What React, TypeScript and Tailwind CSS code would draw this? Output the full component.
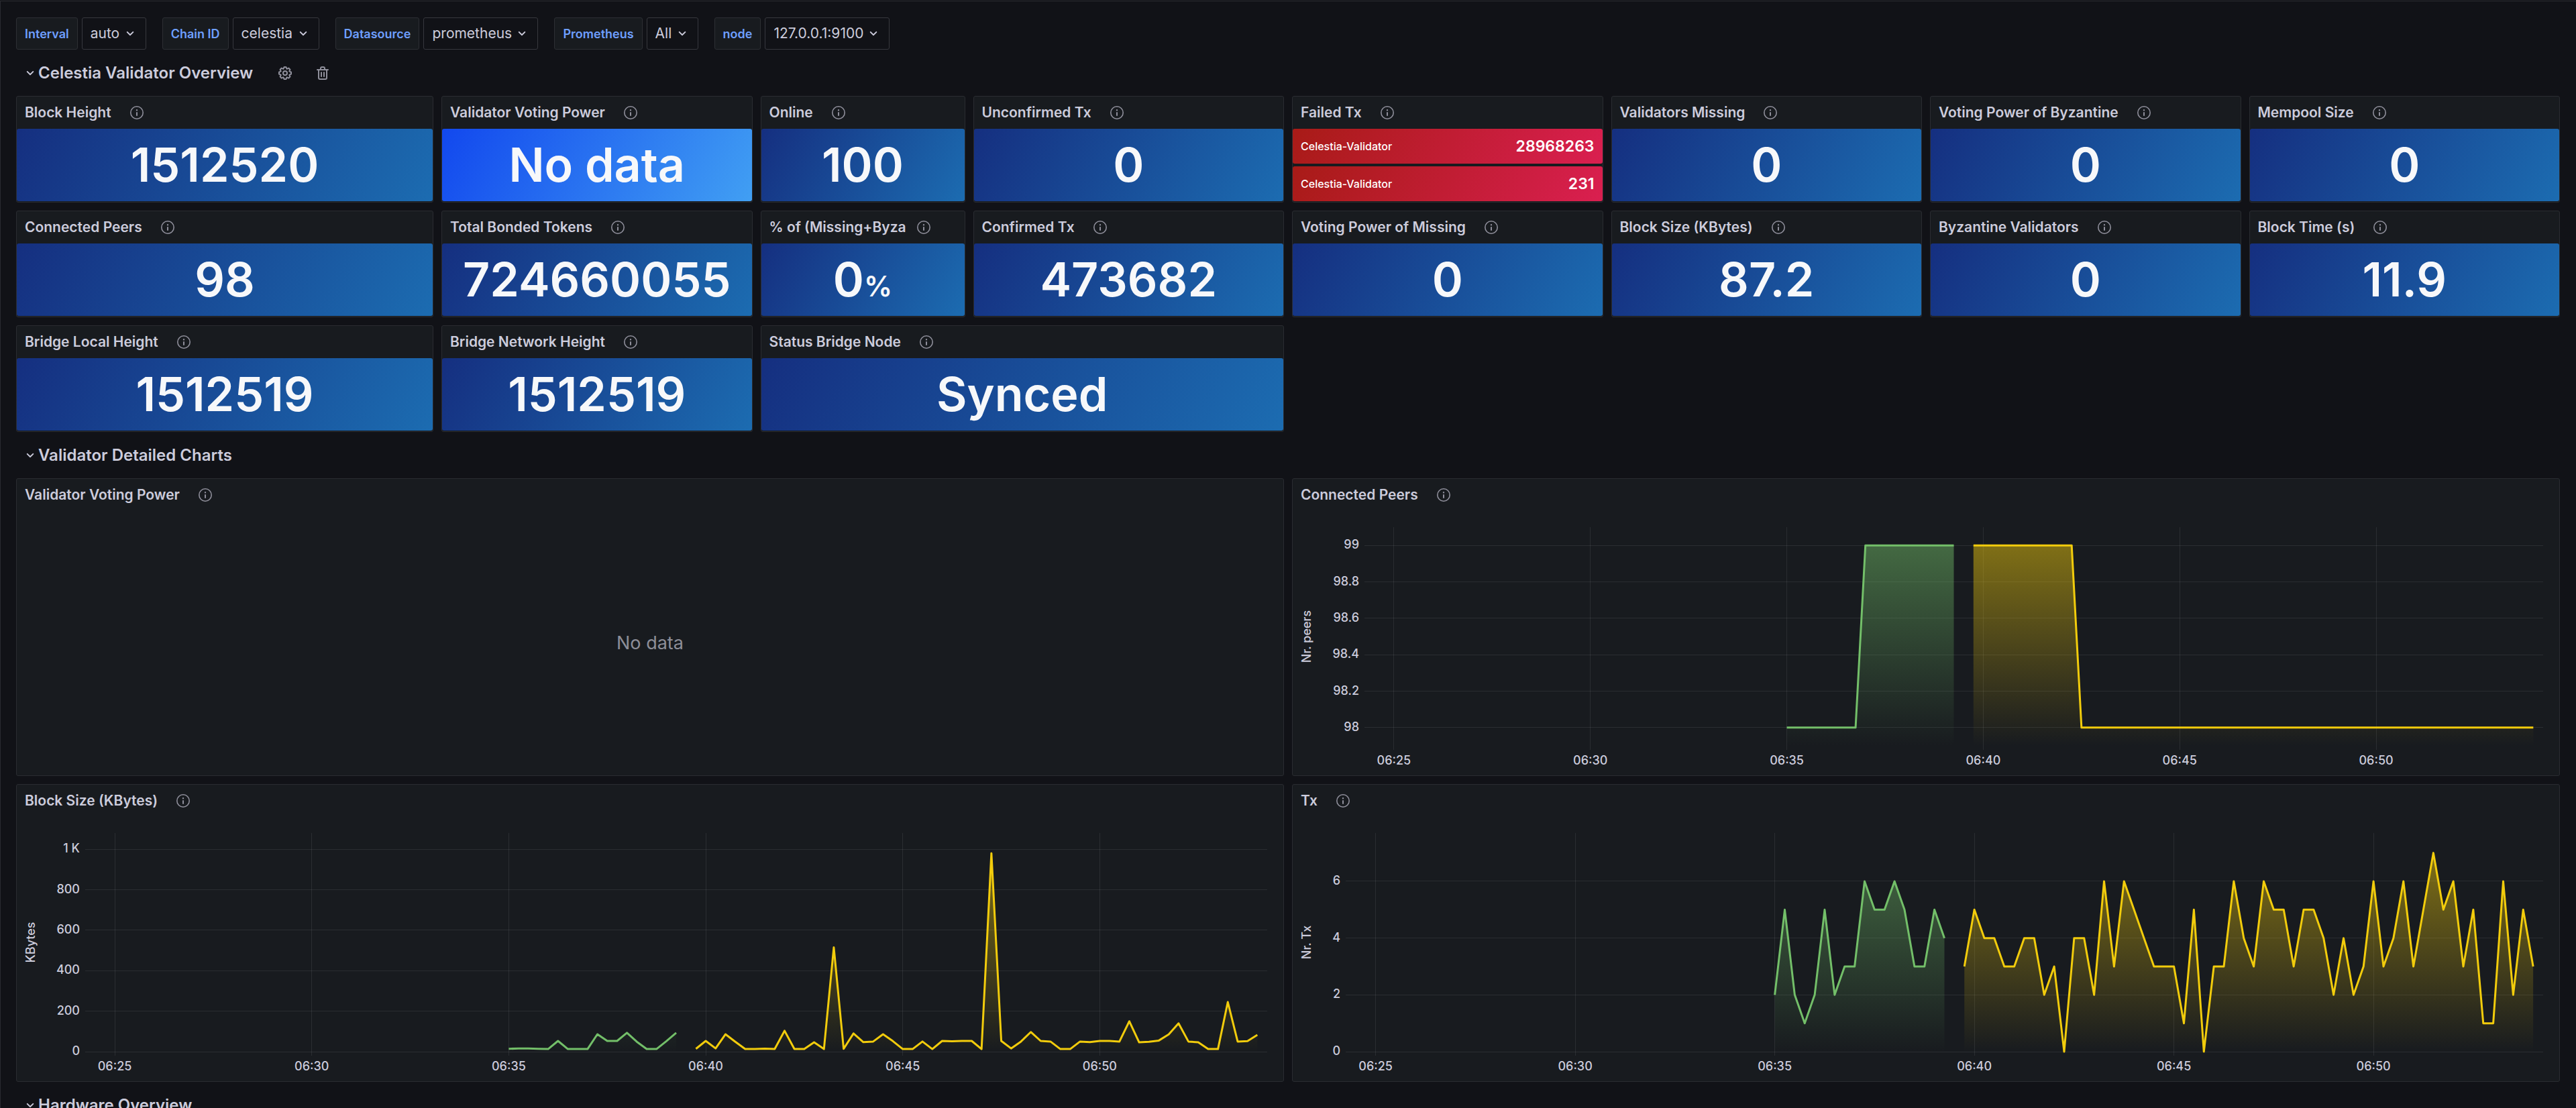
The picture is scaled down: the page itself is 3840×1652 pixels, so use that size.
import { useId, type ReactNode } from "react";

const ICONS = {
  angleDown:
    "M17,9.17a1,1,0,0,0-1.41,0L12,12.71,8.46,9.17a1,1,0,0,0-1.41,0,1,1,0,0,0,0,1.42l4.24,4.24a1,1,0,0,0,1.42,0L17,10.59A1,1,0,0,0,17,9.17Z",
  info: "M12,2A10,10,0,1,0,22,12,10.01,10.01,0,0,0,12,2Zm0,18.4a8.4,8.4,0,1,1,8.4-8.4A8.4,8.4,0,0,1,12,20.4Zm0-9.4a1,1,0,0,0-1,1v4a1,1,0,0,0,2,0v-4A1,1,0,0,0,12,11Zm0-4a1.2,1.2,0,1,0,1.2,1.2A1.2,1.2,0,0,0,12,7Z",
  cog: "M21.32,9.55l-1.89-.63.89-1.78A1,1,0,0,0,20.13,6L18,3.87a1,1,0,0,0-1.15-.19l-1.78.89-.63-1.89A1,1,0,0,0,13.5,2h-3a1,1,0,0,0-.95.68L8.92,4.57,7.14,3.68A1,1,0,0,0,6,3.87L3.87,6a1,1,0,0,0-.19,1.15l.89,1.78-1.89.63A1,1,0,0,0,2,10.5v3a1,1,0,0,0,.68.95l1.89.63-.89,1.78A1,1,0,0,0,3.87,18L6,20.13a1,1,0,0,0,1.15.19l1.78-.89.63,1.89a1,1,0,0,0,.95.68h3a1,1,0,0,0,.95-.68l.63-1.89,1.78.89A1,1,0,0,0,18,20.13L20.13,18a1,1,0,0,0,.19-1.15l-.89-1.78,1.89-.63A1,1,0,0,0,22,13.5v-3A1,1,0,0,0,21.32,9.55ZM20,12.78l-1.2.4A2,2,0,0,0,17.64,16l.57,1.14-1.1,1.1L16,17.64a2,2,0,0,0-2.79,1.16l-.4,1.2H11.22l-.4-1.2A2,2,0,0,0,8,17.64l-1.14.57-1.1-1.1L6.36,16A2,2,0,0,0,5.2,13.18L4,12.78V11.22l1.2-.4A2,2,0,0,0,6.36,8L5.79,6.89l1.1-1.1L8,6.36A2,2,0,0,0,10.82,5.2l.4-1.2h1.56l.4,1.2A2,2,0,0,0,16,6.36l1.14-.57,1.1,1.1L17.64,8a2,2,0,0,0,1.16,2.79l1.2.4ZM12,8a4,4,0,1,0,4,4A4,4,0,0,0,12,8Zm0,6a2,2,0,1,1,2-2A2,2,0,0,1,12,14Z",
  trash:
    "M10,18a1,1,0,0,0,1-1V11a1,1,0,0,0-2,0v6A1,1,0,0,0,10,18ZM20,6H16V5a3,3,0,0,0-3-3H11A3,3,0,0,0,8,5V6H4A1,1,0,0,0,4,8H5V19a3,3,0,0,0,3,3h8a3,3,0,0,0,3-3V8h1a1,1,0,0,0,0-2ZM10,5a1,1,0,0,1,1-1h2a1,1,0,0,1,1,1V6H10Zm7,14a1,1,0,0,1-1,1H8a1,1,0,0,1-1-1V8H17Zm-3-1a1,1,0,0,0,1-1V11a1,1,0,0,0-2,0v6A1,1,0,0,0,14,18Z",
};

function Icon({ name }: { name: keyof typeof ICONS }) {
  return (
    <svg viewBox="0 0 24 24" className="size-6 shrink-0 fill-current" aria-hidden="true">
      <path d={ICONS[name]} />
    </svg>
  );
}

const VARIABLES = [
  { label: "Interval", value: "auto" },
  { label: "Chain ID", value: "celestia" },
  { label: "Datasource", value: "prometheus" },
  { label: "Prometheus", value: "All" },
  { label: "node", value: "127.0.0.1:9100" },
];

function Variable({ label, value }: { label: string; value: string }) {
  const id = useId();
  return (
    <div className="flex gap-1.5">
      <label
        htmlFor={id}
        className="flex h-12 items-center rounded-[3px] border border-[#2d2f34] bg-[#181b1f] px-3 text-[18px] font-semibold text-[#6e9fff]"
      >
        {label}
      </label>
      <div className="relative flex items-center">
        <select
          id={id}
          defaultValue={value}
          className="h-12 appearance-none rounded-[3px] border border-[#37383e] bg-[#111217] pr-[38px] pl-3 text-[21px] text-[#ccccdc]"
        >
          <option>{value}</option>
        </select>
        <span className="pointer-events-none absolute right-3">
          <Icon name="angleDown" />
        </span>
      </div>
    </div>
  );
}

function RowHeader({ title, tools }: { title: string; tools?: boolean }) {
  return (
    <div className="col-span-24 flex items-center pl-[9px]">
      <button type="button" className="flex items-center">
        <Icon name="angleDown" />
        <h2 className="text-[24px] leading-[30px] font-semibold whitespace-nowrap">{title}</h2>
      </button>
      {tools && (
        <div className="ml-9 flex gap-8 text-[#8f8f9b]">
          <button type="button" aria-label="Row settings">
            <Icon name="cog" />
          </button>
          <button type="button" aria-label="Delete row">
            <Icon name="trash" />
          </button>
        </div>
      )}
    </div>
  );
}

function Panel({
  title,
  className,
  tight,
  children,
}: {
  title: string;
  className: string;
  tight?: boolean;
  children: ReactNode;
}) {
  return (
    <section
      className={`flex min-w-0 flex-col rounded-[3px] border border-[#2a2c31] bg-[#181b1f] ${className}`}
    >
      <header className={`flex h-12 shrink-0 items-center pl-3 ${tight ? "gap-3.5" : "gap-[26px]"}`}>
        <h3 className="text-[21px] font-semibold whitespace-nowrap">{title}</h3>
        <button type="button" aria-label={`About ${title}`} className="text-[#8f8f9b]">
          <Icon name="info" />
        </button>
      </header>
      {children}
    </section>
  );
}

const SPANS = {
  2: "col-span-2 row-span-3",
  3: "col-span-3 row-span-3",
  4: "col-span-4 row-span-3",
  5: "col-span-5 row-span-3",
};

type Stat = {
  title: string;
  value: string;
  span: keyof typeof SPANS;
  unit?: string;
  bright?: boolean;
  tight?: boolean;
};

function StatPanel({ title, value, span, unit, bright, tight }: Stat) {
  return (
    <Panel title={title} className={SPANS[span]} tight={tight}>
      <div
        className={`mb-px flex flex-1 items-center justify-center rounded-[3px] text-[70px] leading-none font-semibold text-[#f7f8fa] ${
          bright
            ? "bg-[linear-gradient(120deg,#1248ee,#419ff3)]"
            : "bg-[linear-gradient(120deg,#152f80,#1c6cb1)]"
        }`}
      >
        <p>
          {value}
          {unit && <span className="text-[42px]">{unit}</span>}
        </p>
      </div>
    </Panel>
  );
}

const FIRST_STATS: Stat[] = [
  { title: "Block Height", value: "1512520", span: 4 },
  { title: "Validator Voting Power", value: "No data", span: 3, bright: true },
  { title: "Online", value: "100", span: 2 },
  { title: "Unconfirmed Tx", value: "0", span: 3 },
];

const OTHER_STATS: Stat[] = [
  { title: "Validators Missing", value: "0", span: 3 },
  { title: "Voting Power of Byzantine", value: "0", span: 3 },
  { title: "Mempool Size", value: "0", span: 3 },
  { title: "Connected Peers", value: "98", span: 4 },
  { title: "Total Bonded Tokens", value: "724660055", span: 3 },
  { title: "% of (Missing+Byza", value: "0", unit: "%", span: 2, tight: true },
  { title: "Confirmed Tx", value: "473682", span: 3 },
  { title: "Voting Power of Missing", value: "0", span: 3 },
  { title: "Block Size (KBytes)", value: "87.2", span: 3 },
  { title: "Byzantine Validators", value: "0", span: 3 },
  { title: "Block Time (s)", value: "11.9", span: 3 },
  { title: "Bridge Local Height", value: "1512519", span: 4 },
  { title: "Bridge Network Height", value: "1512519", span: 3 },
  { title: "Status Bridge Node", value: "Synced", span: 5 },
];

const FAILED = [
  { name: "Celestia-Validator", value: "28968263" },
  { name: "Celestia-Validator", value: "231" },
];

function FailedTx() {
  return (
    <Panel title="Failed Tx" className="col-span-3 row-span-3">
      <div className="mb-px flex flex-1 flex-col gap-1">
        {FAILED.map((row) => (
          <div
            key={row.value}
            className="flex flex-1 items-center justify-between rounded-[3px] bg-[linear-gradient(120deg,#a81b17,#da1f50)] px-3 leading-none font-medium text-white"
          >
            <span className="text-[16px]">{row.name}</span>
            <span className="text-[23px] font-semibold">{row.value}</span>
          </div>
        ))}
      </div>
    </Panel>
  );
}

/* Time axis: 30 minutes from 06:24:15, one sample every 15 seconds (120 steps). */
const STEPS = 120;
const FIRST_SAMPLE = 43;
const TIMES = ["06:25", "06:30", "06:35", "06:40", "06:45", "06:50"].map((label, i) => ({
  label,
  x: `${((3 + i * 20) / STEPS) * 100}%`,
}));
const TOP = 24;
const PLOT = 326;

type Series = { color: string; start: number; values: number[] };
type ChartProps = {
  title: string;
  axis: string;
  axisWidth: number;
  min: number;
  max: number;
  ticks: { label: string; value: number }[];
  series: Series[];
  opacity: number;
};

function Chart({ title, axis, axisWidth, min, max, ticks, series, opacity }: ChartProps) {
  const id = useId();
  const y = (v: number) => ((max - v) / (max - min)) * PLOT;
  return (
    <Panel title={title} className="col-span-12 row-span-8">
      <div className="flex flex-1 pr-6">
        <svg
          width={axisWidth}
          className="h-full shrink-0 fill-[#ccccdc] text-[18px] font-medium"
          aria-hidden="true"
        >
          <text transform={`translate(27 ${TOP + PLOT / 2}) rotate(-90)`} textAnchor="middle">
            {axis}
          </text>
          {ticks.map((t) => (
            <text key={t.label} x={axisWidth - 8} y={TOP + y(t.value) + 5} textAnchor="end">
              {t.label}
            </text>
          ))}
        </svg>
        <svg
          className="h-full min-w-0 flex-1 overflow-visible fill-[#ccccdc] text-[18px] font-medium"
          role="img"
          aria-label={`${title} over time`}
        >
          <g className="stroke-[#ccccdc]/10" shapeRendering="crispEdges">
            {ticks.map((t) => (
              <line key={t.label} x1="0" x2="100%" y1={TOP + y(t.value)} y2={TOP + y(t.value)} />
            ))}
            {TIMES.map((t) => (
              <line key={t.label} x1={t.x} x2={t.x} y1={TOP} y2={TOP + PLOT + 6} />
            ))}
          </g>
          <svg
            y={TOP}
            width="100%"
            height={PLOT}
            viewBox={`0 0 ${STEPS} ${PLOT}`}
            preserveAspectRatio="none"
            overflow="visible"
          >
            {series.map((s, i) => {
              const points = s.values
                .map((v, n) => `${FIRST_SAMPLE + s.start + n},${y(v)}`)
                .join(" ");
              const from = FIRST_SAMPLE + s.start;
              const to = from + s.values.length - 1;
              return (
                <g key={s.color}>
                  <linearGradient
                    id={`${id}-${i}`}
                    gradientUnits="userSpaceOnUse"
                    x1="0"
                    x2="0"
                    y1="0"
                    y2={PLOT}
                  >
                    <stop offset="0" stopColor={s.color} stopOpacity={opacity} />
                    <stop offset="1" stopColor={s.color} stopOpacity="0" />
                  </linearGradient>
                  <polygon
                    points={`${from},${PLOT} ${points} ${to},${PLOT}`}
                    fill={`url(#${id}-${i})`}
                  />
                  <polyline
                    points={points}
                    fill="none"
                    stroke={s.color}
                    strokeWidth="3"
                    strokeLinejoin="round"
                    vectorEffect="non-scaling-stroke"
                  />
                </g>
              );
            })}
          </svg>
          {TIMES.map((t) => (
            <text key={t.label} x={t.x} y={TOP + PLOT + 28} textAnchor="middle">
              {t.label}
            </text>
          ))}
        </svg>
      </div>
    </Panel>
  );
}

const GREEN = "#73bf69";
const YELLOW = "#f2cc0c";

const PEERS: ChartProps = {
  title: "Connected Peers",
  axis: "Nr. peers",
  axisWidth: 107,
  min: 97.9,
  max: 99.1,
  opacity: 0.52,
  ticks: [99, 98.8, 98.6, 98.4, 98.2, 98].map((value) => ({ label: String(value), value })),
  series: [
    { color: GREEN, start: 0, values: [...Array(8).fill(98), ...Array(10).fill(99)] },
    { color: YELLOW, start: 19, values: [...Array(11).fill(99), ...Array(47).fill(98)] },
  ],
};

const BLOCK_SIZE: ChartProps = {
  title: "Block Size (KBytes)",
  axis: "KBytes",
  axisWidth: 102,
  min: 0,
  max: 1080,
  opacity: 0.52,
  ticks: [
    { label: "1 K", value: 1000 },
    ...[800, 600, 400, 200, 0].map((value) => ({ label: String(value), value })),
  ],
  series: [
    {
      color: GREEN,
      start: 0,
      values: [14, 16, 16, 14, 13, 53, 13, 13, 13, 86, 53, 53, 93, 49, 13, 13, 52, 93],
    },
    {
      color: YELLOW,
      start: 19,
      values: [
        14, 53, 16, 86, 49, 13, 13, 15, 13, 103, 13, 13, 46, 13, 515, 14, 90, 47, 50, 86, 52, 13,
        13, 50, 13, 53, 51, 53, 53, 13, 980, 53, 16, 50, 97, 53, 50, 13, 13, 50, 47, 53, 53, 50,
        150, 46, 49, 55, 85, 140, 50, 46, 13, 13, 245, 50, 52, 83,
      ],
    },
  ],
};

const TX: ChartProps = {
  title: "Tx",
  axis: "Nr. Tx",
  axisWidth: 79,
  min: 0,
  max: 7.7,
  opacity: 0.52,
  ticks: [6, 4, 2, 0].map((value) => ({ label: String(value), value })),
  series: [
    { color: GREEN, start: 0, values: [2, 5, 2, 1, 2, 5, 2, 3, 3, 6, 5, 5, 6, 5, 3, 3, 5, 4] },
    {
      color: YELLOW,
      start: 19,
      values: [
        3, 5, 4, 4, 3, 3, 4, 4, 2, 3, 0, 4, 4, 2, 6, 3, 6, 5, 4, 3, 3, 3, 1, 5, 0, 3, 3, 6, 4, 3,
        6, 5, 5, 3, 5, 5, 4, 2, 4, 2, 3, 6, 3, 4, 6, 3, 5, 7, 5, 6, 3, 5, 1, 1, 6, 2, 5, 3,
      ],
    },
  ],
};

export default function App() {
  return (
    <div className="h-screen overflow-hidden bg-[#111217] pt-px font-[Inter,sans-serif] text-[#ccccdc]">
      <main className="flex flex-col gap-3 border-t border-l border-[#2a2b31] pt-6 pr-6 pl-[23px]">
        <div className="flex flex-wrap gap-6">
          {VARIABLES.map((v) => (
            <Variable key={v.label} {...v} />
          ))}
        </div>
        <div className="grid auto-rows-[45px] grid-cols-24 gap-3">
          <RowHeader title="Celestia Validator Overview" tools />
          {FIRST_STATS.map((s) => (
            <StatPanel key={s.title} {...s} />
          ))}
          <FailedTx />
          {OTHER_STATS.map((s) => (
            <StatPanel key={s.title} {...s} />
          ))}
          <RowHeader title="Validator Detailed Charts" />
          <Panel title="Validator Voting Power" className="col-span-12 row-span-8">
            <div className="flex flex-1 items-center justify-center text-[27px] text-[#8d8e98]">
              No data
            </div>
          </Panel>
          <Chart {...PEERS} />
          <Chart {...BLOCK_SIZE} />
          <Chart {...TX} />
          <RowHeader title="Hardware Overview" />
        </div>
      </main>
    </div>
  );
}
